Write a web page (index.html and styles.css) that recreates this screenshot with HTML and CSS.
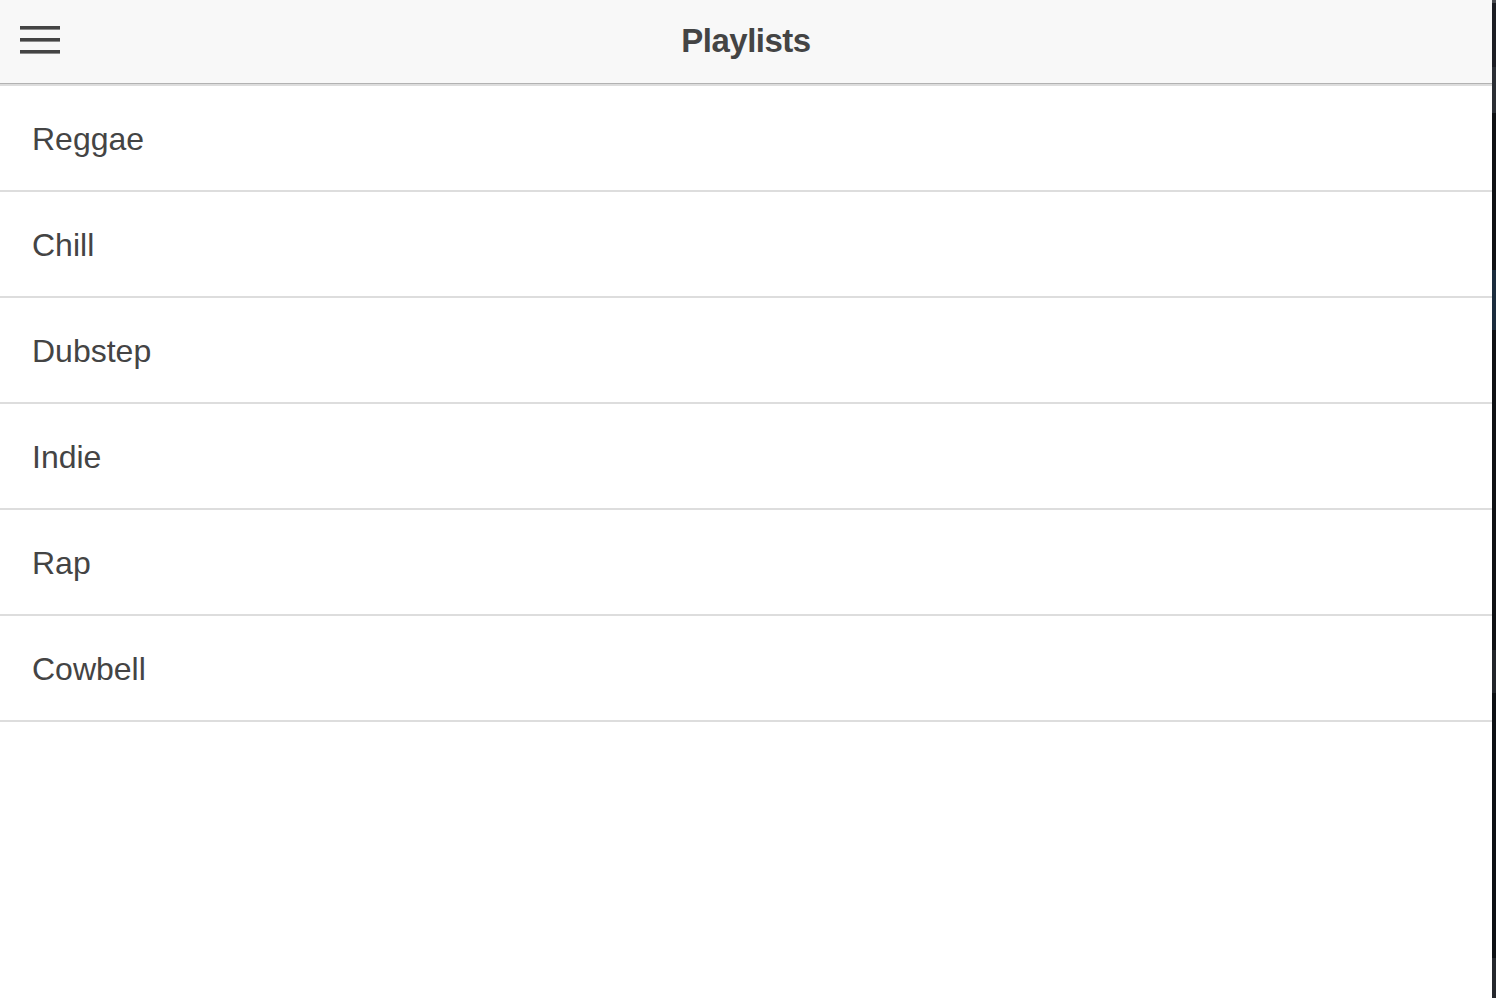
FILE: index.html
```html
<!DOCTYPE html>
<html lang="en">
<head>
<meta charset="utf-8">
<title>Playlists</title>
<link rel="stylesheet" href="styles.css">
</head>
<body>
<div class="app">
  <div class="view">
    <header class="bar">
      <button class="menu-btn" aria-label="Menu">
        <svg width="40" height="28" viewBox="0 0 40 28" aria-hidden="true">
          <rect x="0" y="0" width="40" height="3.6" fill="#444"/>
          <rect x="0" y="12" width="40" height="3.6" fill="#444"/>
          <rect x="0" y="24" width="40" height="3.6" fill="#444"/>
        </svg>
      </button>
      <h1 class="title">Playlists</h1>
    </header>
    <ul class="list">
      <li class="item">Reggae</li>
      <li class="item">Chill</li>
      <li class="item">Dubstep</li>
      <li class="item">Indie</li>
      <li class="item">Rap</li>
      <li class="item">Cowbell</li>
    </ul>
  </div>
  <div class="edge"></div>
</div>
</body>
</html>
```

FILE: styles.css
```css
html, body {
  margin: 0;
  padding: 0;
  height: 100%;
}
body {
  font-family: "Liberation Sans", Arial, sans-serif;
  color: #444;
  background: #fff;
}
.app {
  display: grid;
  grid-template-columns: 1fr 4px;
  height: 998px;
}
.view {
  background: #fff;
  display: flex;
  flex-direction: column;
}
.bar {
  height: 83px;
  background: #f8f8f8;
  border-bottom: 1px solid #b2b2b2;
  display: grid;
  grid-template-columns: 1fr auto 1fr;
  align-items: center;
  box-sizing: content-box;
}
.menu-btn {
  justify-self: start;
  margin-left: 20px;
  margin-top: -3px;
  padding: 0;
  border: 0;
  background: none;
  display: flex;
  width: 40px;
  height: 28px;
}
.title {
  grid-column: 2;
  margin: 0;
  font-size: 33px;
  font-weight: 700;
  letter-spacing: -0.5px;
  color: #444;
  line-height: 40px;
  padding-bottom: 1px;
}
.list {
  list-style: none;
  margin: 0;
  padding: 0;
}
.item {
  border-top: 2px solid #dddddd;
  display: flex;
  align-items: center;
  padding-left: 32px;
  padding-top: 2px;
  box-sizing: content-box;
  height: 102px;
  font-size: 32px;
  color: #444;
}
.item:last-child {
  border-bottom: 2px solid #dddddd;
}
.edge {
  background: linear-gradient(to bottom,
    #4a4b50 0, #4a4b50 3px,
    #1c1d23 3px, #1c1d23 67px,
    #2b2e34 67px, #2b2e34 113px,
    #0f1114 113px, #0f1114 270px,
    #1b2c3d 270px, #1b2c3d 330px,
    #0f1114 330px, #0f1114 650px,
    #22252a 650px, #22252a 693px,
    #0d1014 693px, #0d1014 958px,
    #25282d 958px, #25282d 998px);
}
```
